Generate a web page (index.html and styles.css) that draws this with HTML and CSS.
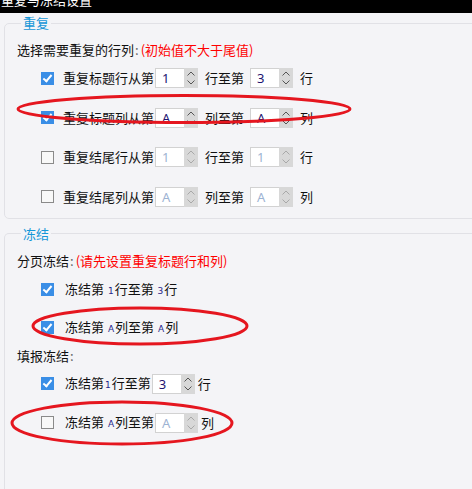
FILE: index.html
```html
<!DOCTYPE html>
<html lang="zh-CN">
<head>
    <meta charset="UTF-8">
    <title>重复与冻结设置</title>
    <link rel="stylesheet" href="styles.css">
</head>
<body>

    <div class="titlebar"><span>重复与冻结设置</span></div>

    <!-- 重复 -->
    <fieldset class="group group-repeat">
        <legend>重复</legend>
        <div class="hint">选择需要重复的行列<span class="colon">:</span><span class="warn">(初始值不大于尾值)</span></div>

        <div class="opt">
            <span class="check on"></span>
            <span class="lbl lbl-first">重复标题行从第</span>
            <span class="spin first"><span class="val">1</span><span class="btns"><svg width="14" height="20" viewBox="0 0 14 20"><path d="M3.5 7.5 7 4l3.5 3.5M3.5 12.5 7 16l3.5-3.5"/></svg></span></span>
            <span class="lbl">行至第</span>
            <span class="spin"><span class="val">3</span><span class="btns"><svg width="14" height="20" viewBox="0 0 14 20"><path d="M3.5 7.5 7 4l3.5 3.5M3.5 12.5 7 16l3.5-3.5"/></svg></span></span>
            <span class="lbl">行</span>
        </div>

        <div class="opt">
            <span class="check on"></span>
            <span class="lbl lbl-first">重复标题列从第</span>
            <span class="spin first"><span class="val">A</span><span class="btns"><svg width="14" height="20" viewBox="0 0 14 20"><path d="M3.5 7.5 7 4l3.5 3.5M3.5 12.5 7 16l3.5-3.5"/></svg></span></span>
            <span class="lbl">列至第</span>
            <span class="spin"><span class="val">A</span><span class="btns"><svg width="14" height="20" viewBox="0 0 14 20"><path d="M3.5 7.5 7 4l3.5 3.5M3.5 12.5 7 16l3.5-3.5"/></svg></span></span>
            <span class="lbl">列</span>
        </div>

        <div class="opt">
            <span class="check"></span>
            <span class="lbl lbl-first">重复结尾行从第</span>
            <span class="spin first off"><span class="val">1</span><span class="btns"><svg width="14" height="20" viewBox="0 0 14 20"><path d="M3.5 7.5 7 4l3.5 3.5M3.5 12.5 7 16l3.5-3.5"/></svg></span></span>
            <span class="lbl">行至第</span>
            <span class="spin off"><span class="val">1</span><span class="btns"><svg width="14" height="20" viewBox="0 0 14 20"><path d="M3.5 7.5 7 4l3.5 3.5M3.5 12.5 7 16l3.5-3.5"/></svg></span></span>
            <span class="lbl">行</span>
        </div>

        <div class="opt">
            <span class="check"></span>
            <span class="lbl lbl-first">重复结尾列从第</span>
            <span class="spin first off"><span class="val">A</span><span class="btns"><svg width="14" height="20" viewBox="0 0 14 20"><path d="M3.5 7.5 7 4l3.5 3.5M3.5 12.5 7 16l3.5-3.5"/></svg></span></span>
            <span class="lbl">列至第</span>
            <span class="spin off"><span class="val">A</span><span class="btns"><svg width="14" height="20" viewBox="0 0 14 20"><path d="M3.5 7.5 7 4l3.5 3.5M3.5 12.5 7 16l3.5-3.5"/></svg></span></span>
            <span class="lbl">列</span>
        </div>
    </fieldset>

    <!-- 冻结 -->
    <fieldset class="group group-freeze">
        <legend>冻结</legend>
        <div class="hint">分页冻结<span class="colon">:</span><span class="warn">(请先设置重复标题行和列)</span></div>

        <div class="opt freeze-a">
            <span class="check on"></span>
            <span class="lbl lbl-freeze">冻结第 <span class="num">1</span>行至第 <span class="num">3</span>行</span>
        </div>

        <div class="opt freeze-b">
            <span class="check on"></span>
            <span class="lbl lbl-freeze">冻结第 <span class="num">A</span>列至第 <span class="num">A</span>列</span>
        </div>

        <div class="hint hint-fill">填报冻结<span class="colon">:</span></div>

        <div class="opt freeze-c">
            <span class="check on"></span>
            <span class="lbl lbl-freeze">冻结第<span class="num">1</span>行至第</span>
            <span class="spin tight"><span class="val">3</span><span class="btns"><svg width="14" height="20" viewBox="0 0 14 20"><path d="M3.5 7.5 7 4l3.5 3.5M3.5 12.5 7 16l3.5-3.5"/></svg></span></span>
            <span class="lbl">行</span>
        </div>

        <div class="opt freeze-d">
            <span class="check"></span>
            <span class="lbl lbl-freeze">冻结第 <span class="num">A</span>列至第</span>
            <span class="spin tight off"><span class="val">A</span><span class="btns"><svg width="14" height="20" viewBox="0 0 14 20"><path d="M3.5 7.5 7 4l3.5 3.5M3.5 12.5 7 16l3.5-3.5"/></svg></span></span>
            <span class="lbl">列</span>
        </div>
    </fieldset>

    <!-- 红色标注圈 -->
    <svg class="marks" width="472" height="489" viewBox="0 0 472 489">
        <ellipse cx="184" cy="109" rx="166" ry="13.5"/>
        <ellipse cx="140" cy="326" rx="107" ry="18"/>
        <ellipse cx="122" cy="423" rx="110" ry="21"/>
    </svg>

</body>
</html>
```

FILE: styles.css
```css
body {
    margin: 0;
    width: 472px;
    height: 489px;
    overflow: hidden;
    position: relative;
    background: #f4f4f7;
    font-family: "Noto Sans CJK SC", "Noto Sans", sans-serif;
    font-size: 13px;
    line-height: 18px;
    color: #111;
}

.titlebar {
    height: 13px;
    background: #000;
    color: #fff;
    overflow: hidden;
    padding-left: 1px;
}
.titlebar span {
    display: block;
    line-height: 13px;
    margin-top: -7px;
}

/* 分组框 */
.group {
    margin: 1px -20px 0 4px;
    padding: 0 0 11px 12px;
    border: 1px solid #e1e1e6;
    border-radius: 5px;
}
.group legend {
    margin-left: 4px;
    padding: 0 2px;
    color: #1597d8;
    line-height: 18px;
}
.group-freeze {
    margin-top: 6px;
    box-sizing: border-box;
    height: 265px;
    padding-bottom: 0;
    border-bottom: none;
    border-radius: 5px 5px 0 0;
}

.hint {
    margin-top: 9px;
}
.colon { color: #666; margin: 0 2px 0 1px; }
.warn { color: #f00; }

.opt {
    display: flex;
    align-items: center;
    height: 20px;
    padding-left: 24px;
    margin-top: 19.5px;
}
.group-repeat .hint + .opt { margin-top: 9px; }
.freeze-a { margin-top: 10px; }
.freeze-b { margin-top: 18px; }
.hint-fill { margin-top: 9px; }
.freeze-c { margin-top: 9px; }
.freeze-d { margin-top: 19px; }

/* 复选框 */
.check {
    width: 13px;
    height: 13px;
    box-sizing: border-box;
    border: 1px solid #8a8a8a;
    background: #f8f8f8;
    position: relative;
    flex: none;
}
.check.on {
    border-color: #3a8ee6;
    background: #3a8ee6;
}
.check.on::after {
    content: "";
    position: absolute;
    left: 3px;
    top: 0px;
    width: 3px;
    height: 7px;
    border: solid #fff;
    border-width: 0 2px 2px 0;
    transform: rotate(40deg);
}

.lbl { white-space: pre; }
.lbl-first { margin-left: 9px; width: 92px; }
.lbl-freeze { margin-left: 11px; }
.num {
    font-family: "DejaVu Sans", sans-serif;
    font-size: 9px;
    color: #24248a;
    margin: 0 1px;
}

/* 数字微调框 */
.spin {
    display: flex;
    height: 20px;
    margin: 0 7px 0 6px;
    flex: none;
}
.spin.first { margin-left: 0; }
.spin.tight { margin: 0 3px 0 1px; }
.spin .val {
    width: 29px;
    box-sizing: border-box;
    border: 1px solid #d2d2d2;
    border-right: none;
    background: #fff;
    padding-left: 6px;
    font-family: "Noto Sans", sans-serif;
    font-size: 13px;
    line-height: 18px;
    color: #1d1470;
}
.spin .btns {
    width: 14px;
    background: #d8d8d8;
}
.spin svg { display: block; }
.spin svg path {
    fill: none;
    stroke: #555;
    stroke-width: 1;
}
.spin.off .val { color: #9db3d3; }
.spin.off svg path { stroke: #a8a8a8; }

/* 标注 */
.marks {
    position: absolute;
    left: 0;
    top: 0;
    pointer-events: none;
}
.marks ellipse {
    fill: none;
    stroke: #e5161f;
    stroke-width: 3;
}
```
